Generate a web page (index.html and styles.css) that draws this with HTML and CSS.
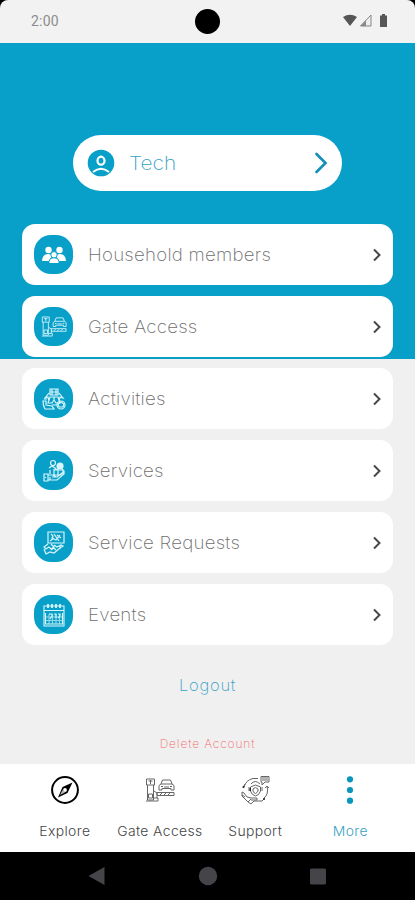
FILE: index.html
```html
<!DOCTYPE html>
<html lang="en">
<head>
<meta charset="utf-8">
<title>More</title>
<link rel="stylesheet" href="styles.css">
</head>
<body>
<svg width="0" height="0" class="defs">
  <symbol id="chev" viewBox="0 0 10 14"><path d="M2 1.500 7.500 7 2 12.500" fill="none" stroke="currentColor" stroke-width="2"/></symbol>
  <symbol id="gate" viewBox="0 0 30 26"><g fill="none" stroke="currentColor" stroke-width="1"><path d="M1.500 2h8v6h-8zM2.500 8v15h6V8M3.500 17h4v4h-4zM1 24h12v-3H9M9 14l3 2v5M12 15.500h17v3H12zM15 18l2-2m2 2 2-2m2 2 2-2M14 13V8.500l2-1.500 1.500-4h8L27 7l2 1.500V13h-3v-1.500h-9V13zM16 7h11M16 9.500h2m7 0h2M19 10h5"/><path d="M3.500 4h4M5.500 3v4"/></g></symbol>
</svg>
<div class="phone">
  <header class="status">
    <span class="time">2:00</span>
    <span class="camera"></span>
    <svg class="signals" width="48" height="16" viewBox="0 0 48 16"><path d="M1 4Q8-.5 15 4L8 13z" fill="#565656"/><path d="M29 2v11H18.500z" fill="#eee" stroke="#858585" stroke-width="1"/><path d="M24 7.500V13h-5.500z" fill="#888"/><path d="M38 2.500h2V1h3v1.500h2V14h-7z" fill="#565656"/></svg>
  </header>
  <main class="content">
    <a class="profile">
      <svg class="avatar" width="28" height="28" viewBox="0 0 28 28"><circle cx="14" cy="14" r="13.300" fill="#08a0c8"/><ellipse cx="14" cy="11.700" rx="3.500" ry="4" fill="none" stroke="#fff" stroke-width="2.200"/><path d="M6 23Q14 16.500 22 23" fill="none" stroke="#fff" stroke-width="2"/></svg>
      <span class="name"><span class="wide">Tech</span></span>
      <svg class="go" width="14" height="22" viewBox="0 0 14 22"><path d="M2.500 2l9 9-9 9" fill="none" stroke="#178fb8" stroke-width="2.700" stroke-linecap="round"/></svg>
    </a>
    <nav class="menu">
      <a class="card"><span class="badge"><svg width="26" height="26" viewBox="0 0 26 26"><g fill="#fff"><circle cx="7.500" cy="8" r="3.200"/><circle cx="18.500" cy="8" r="3.200"/><path d="M1 19q.5-7 6-7 3 0 4 2-2 2-2 5zM25 19q-.5-7-6-7-3 0-4 2 2 2 2 5z"/></g><g fill="#fff" stroke="#08a0c8" stroke-width="1"><path d="M8 21.500v-2q.5-4 5-4t5 4v2z"/><circle cx="13" cy="12.800" r="3.200"/></g></svg></span><span class="label"><span class="wide">Household members</span></span><svg class="chev"><use href="#chev"/></svg></a>
      <a class="card"><span class="badge"><svg width="26" height="23"><use href="#gate"/></svg></span><span class="label"><span class="wide">Gate Access</span></span><svg class="chev"><use href="#chev"/></svg></a>
      <a class="card"><span class="badge"><svg width="26" height="26" viewBox="0 0 26 26"><g fill="none" stroke="currentColor" stroke-width="1.200"><path d="M9 3h8v6H9zM11 3v6m4-6v6M9 6h8M8 7l-4 5 3-1 1 4M18 7l4 5-3-1-1 4M9 11h8l2 6h-4l-2-3-2 3H7zM2 15h3v4l6 1 2 3H4q-2-3-2-8zM13 11v4"/><circle cx="20" cy="19" r="4"/><path d="m20 16 3 2-1 3h-4l-1-3zM11 19h5M3 13h3"/></g></svg></span><span class="label"><span class="wide">Activities</span></span><svg class="chev"><use href="#chev"/></svg></a>
      <a class="card"><span class="badge"><svg width="26" height="26" viewBox="0 0 26 26"><g fill="none" stroke="currentColor" stroke-width="1.200"><circle cx="12" cy="5" r="2.500"/><circle cx="19" cy="8" r="3" fill="currentColor"/><path d="M8 10l3-2 3 2 2 2M9 12v4m4-5v6M13 12h9v5h-9zM17 11v6M3 16h4v7H3zM7 17h5l3 2h-4M7 22h9l7-6-2-1-5 4M21 11l2 2v3M4.500 19v1M9 22v-3"/></g></svg></span><span class="label"><span class="wide">Services</span></span><svg class="chev"><use href="#chev"/></svg></a>
      <a class="card"><span class="badge"><svg width="26" height="26" viewBox="0 0 26 26"><g fill="none" stroke="currentColor" stroke-width="1.200"><path d="M7 2h16v11H7zM10 4l2 2-1 2 4 2 4-5M13 4l5 7M20 8l-4-3M9 11l4-3M7 14l-4 3 2 2 3-2 2 2 3-2-3-3M3 19l2 5 4-2 4 1 6-5 3-2-2-1-4 2-3-2M10 20l3-2 2 2M19 15v4"/></g></svg></span><span class="label"><span class="wide">Service Requests</span></span><svg class="chev"><use href="#chev"/></svg></a>
      <a class="card"><span class="badge"><svg width="26" height="26" viewBox="0 0 26 26"><g fill="none" stroke="currentColor" stroke-width="1.100"><path d="M3 4h20v20H3zM3 8.500h20M4.500 11v11h17V11"/><path d="M7 2v4m4-4v4m4-4v4m4-4v4" stroke-width="1.800"/><path d="M5 15h16M5 18.500h16M8 12v10m3.500-10v10m3.500-10v10m3.500-10v10" opacity=".65"/><path d="M8 12h3v2l-2 3m4-5h2v4m2-4h2v2l-2 2"/></g></svg></span><span class="label"><span class="wide">Events</span></span><svg class="chev"><use href="#chev"/></svg></a>
    </nav>
    <a class="logout">Logout</a>
    <a class="delete"><span>Delete Account</span></a>
  </main>
  <nav class="tabs">
    <a class="tab"><svg width="30" height="30" viewBox="0 0 30 30"><circle cx="15" cy="15" r="12.900" fill="none" stroke="#000" stroke-width="2"/><path d="M22.500 7.500 17.500 18 8 22.500 12.500 12z"/><circle cx="15" cy="15" r="1.900" fill="#fff"/><path d="m10 20 2.500-5 2.500 2.500z" fill="#fff" opacity=".7"/></svg><span>Explore</span></a>
    <a class="tab"><svg class="line" width="30" height="30" viewBox="0 0 30 30"><use href="#gate" width="30" height="26" y="2"/></svg><span>Gate Access</span></a>
    <a class="tab"><svg class="line" width="30" height="30" viewBox="0 0 30 30"><g fill="none" stroke="currentColor" stroke-width="1"><path d="M4 12Q6 5 13 3.500h5M3 13l2-4m22 2q2 8-3 12m3-12-2 2m2-2 2 2M21 1.500h8V7h-4l-3 3V7h-1zM22 3h6m-6 2h6"/><path d="m15.500 10 5 2v4q-1 4-5 5-4-1-5-5v-4zM11 9q4-5 9 0M9 12v4m13-4v4"/><path d="M15.500 12.500 18 14v2q-1 2-2.500 2.500Q13.500 18 13 16v-2z"/><path d="m2 17 2 1 3 4 4 1 6 0v2h-6M2 17v4l6 6 3 2 3-3h8l3-3M2 20l3 2M8 27l3-3"/></g><g fill="#222"><circle cx="3.500" cy="12" r="1"/><circle cx="24" cy="24" r="1"/><path d="M9.500 13h1.500v3H9.500z"/></g></svg><span>Support</span></a>
    <a class="tab active"><svg width="30" height="30" viewBox="0 0 30 30" fill="#0797bd"><circle cx="15" cy="4.300" r="3.100"/><circle cx="15" cy="15" r="3.100"/><circle cx="15" cy="25.700" r="3.100"/></svg><span>More</span></a>
  </nav>
  <footer class="system">
    <svg width="20" height="20" viewBox="0 0 20 20"><path d="M1.500 10 17.500 1v18z"/></svg>
    <svg width="20" height="20" viewBox="0 0 20 20"><circle cx="10" cy="10" r="9.200"/></svg>
    <svg width="20" height="20" viewBox="0 0 20 20"><rect x="2" y="2.500" width="16" height="16" rx="1.500"/></svg>
  </footer>
</div>
</body>
</html>
```

FILE: styles.css
```css
* { box-sizing: border-box; }
body { margin: 0; background: #000; font-family: Inter, "Open Sans", sans-serif; font-weight: 200; }
.defs { position: absolute; }
.phone { width: 415px; height: 900px; display: flex; flex-direction: column; overflow: hidden; border-radius: 8px 8px 0 0; background: #000; }
.status { height: 42.500px; flex: none; background: #f2f2f2; display: grid; grid-template-columns: 1fr 26px 1fr; align-items: center; padding: 0 25px 0 31px; }
.time { font: 400 14px Roboto, sans-serif; color: #8c8c8c; letter-spacing: .2px; }
.camera { width: 25px; height: 25px; border-radius: 50%; background: #000; margin-left: -2.500px; }
.signals { justify-self: end; }
.content { height: 721px; flex: none; display: flex; flex-direction: column; align-items: center; padding-top: 92.500px; background: linear-gradient(#08a0c8 316.500px, #f0f0f0 316.500px); }
.profile { width: 269px; height: 56px; flex: none; background: #fff; border-radius: 28px; display: flex; align-items: center; padding: 0 14px 0 14px; }
.name { flex: 1; margin-left: 14px; font-size: 19px; color: #35a0c6; }
.wide { display: inline-block; transform: scaleX(1.1); transform-origin: left; }
.menu { margin-top: 33px; width: 371px; display: grid; gap: 11px; }
.card { height: 61px; background: #fff; border-radius: 13px; display: flex; align-items: center; padding: 0 11px 0 12px; }
.badge { width: 39px; height: 39px; border-radius: 17px; background: #08a0c8; color: #d9f5fc; display: flex; align-items: center; justify-content: center; }
.label { flex: 1; margin-left: 14.500px; font-size: 17px; color: #6e6e6e; letter-spacing: .2px; white-space: nowrap; }
.chev { width: 10px; height: 14px; color: #484848; }
.logout { margin-top: 30px; height: 20px; font-size: 16.500px; line-height: 20px; color: #35a0c6; letter-spacing: .75px; }
.delete { margin-top: 41px; height: 16px; font-size: 12px; line-height: 16px; color: #f06c6c; letter-spacing: .85px; }
.tabs { height: 88.500px; flex: none; background: #fff; display: grid; grid-template-columns: repeat(4, 1fr); padding: 11.500px 17px 0; }
.tab { display: flex; flex-direction: column; align-items: center; gap: 16.500px; font-size: 13px; font-weight: 300; line-height: 18px; color: #444; white-space: nowrap; letter-spacing: .35px; }
.tab span { transform: scaleX(1.07); }
.line { color: #666; }
.active { color: #389fc5; }
.system { height: 48px; flex: none; display: flex; justify-content: center; align-items: center; gap: 90.500px; fill: #454549; background: #000; }
```
